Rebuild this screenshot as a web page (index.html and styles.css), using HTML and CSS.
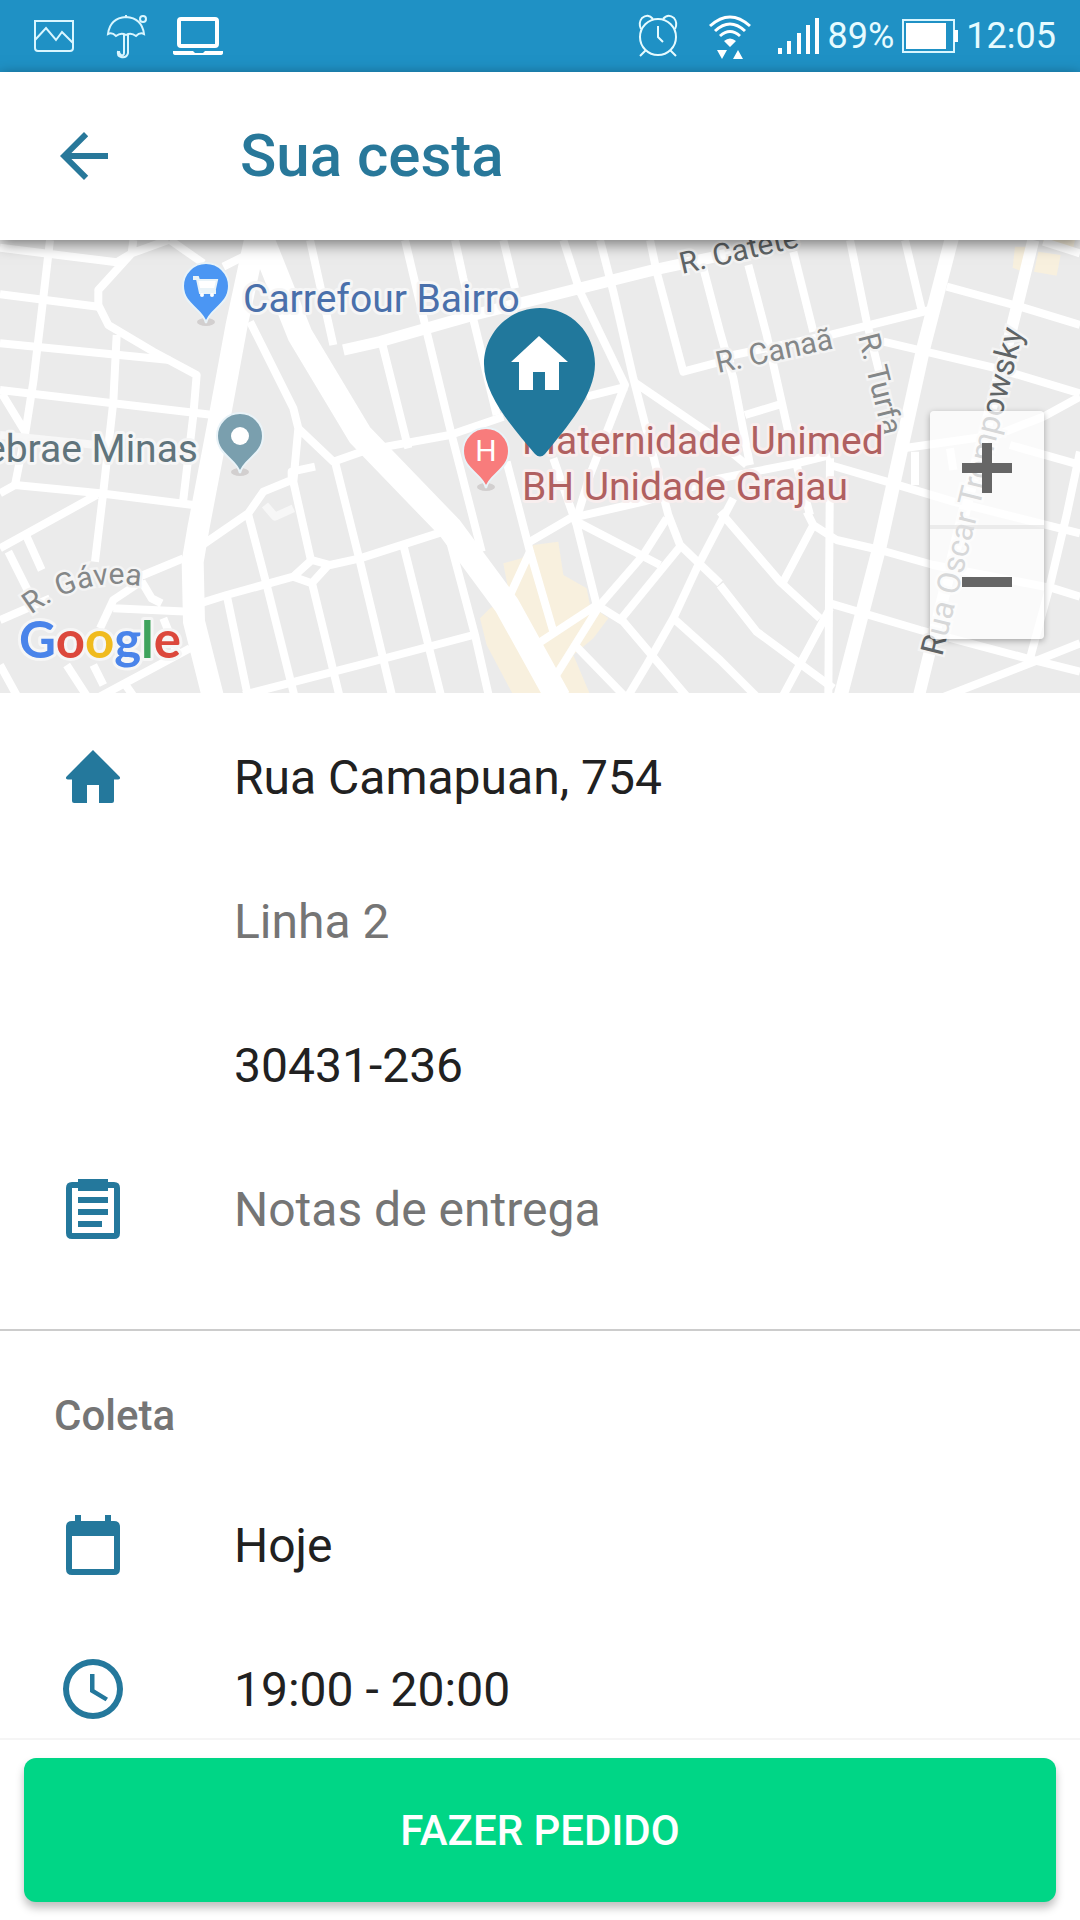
FILE: index.html
```
<!DOCTYPE html>
<html lang="pt-BR">
<head>
  <meta charset="UTF-8">
  <meta name="viewport" content="width=device-width, initial-scale=1">
  <title>Sua cesta</title>
  <link rel="stylesheet" href="styles.css">
</head>
<body>

<!-- Status bar -->
<div class="status-bar">
  <div class="status-group">
    <svg class="status-icon" viewBox="0 0 48 48" fill="none" stroke="#d9f6ff" stroke-width="2">
      <path d="M5 9H43V36Q43 39 40 39H8Q5 39 5 36Z"/>
      <path d="M5 28L16 16L26 28L32 20L43 31"/>
    </svg>
    <svg class="status-icon" viewBox="0 0 48 48" fill="none" stroke="#d9f6ff" stroke-width="2">
      <path d="M6 22Q8 6 24 5Q40 6 42 22Q38 20 34 24Q29 20 24 23Q19 20 14 24Q10 20 6 22Z"/>
      <path d="M24 3V5M22 23V41Q22 44 19 43Q17 42 17 39M26 23V41Q25 46 19 45Q15 44 16 39"/>
      <circle cx="41" cy="7" r="3"/>
    </svg>
    <svg class="status-icon" viewBox="0 0 48 48" fill="none" stroke="#fff">
      <rect x="5" y="7" width="38" height="27" rx="2" stroke-width="4"/>
      <path d="M-1 39H19L21 41H29L31 39H49V41Q49 43 46 43H2Q-1 43 -1 41Z" fill="#fff" stroke="none"/>
    </svg>
  </div>
  <div class="status-group">
    <svg class="status-icon" viewBox="0 0 48 48" fill="none" stroke="#e6fbff" stroke-width="2">
      <circle cx="24" cy="25" r="18"/>
      <path d="M7 17Q4 11 8 6Q14 1 19 7M41 17Q44 11 40 6Q34 1 29 7M12 38L6 44M36 38L42 44"/>
      <path d="M24 14V25L29 30"/>
    </svg>
    <svg class="status-icon" viewBox="0 0 48 48" fill="none" stroke="#fff" stroke-width="3">
      <path d="M4 14Q24 -4 44 14M9 19Q24 5 39 19M14 24Q24 15 34 24"/>
      <path d="M18 29Q24 24 30 29L24 35ZM11 38H21L16 47ZM27 47H37L32 38Z" fill="#fff" stroke="none"/>
    </svg>
    <svg class="signal-icon" viewBox="3 0 42 48" fill="#fff">
      <path d="M3 36H7V42H3ZM12 29H16V42H12ZM22 21H26V42H22ZM31 13H35V42H31ZM40 6H44V42H40Z"/>
    </svg>
    <div class="battery">
      <span>89%</span>
      <svg class="battery-icon" viewBox="0 0 56 48">
        <rect x="1" y="8" width="51" height="32" fill="none" stroke="#d9f6ff" stroke-width="2"/>
        <path d="M4 11H44V37H4ZM52 18H56V30H52Z" fill="#fff"/>
      </svg>
      <time>12:05</time>
    </div>
  </div>
</div>

<!-- App bar -->
<header class="app-bar">
  <button class="back-btn" aria-label="Voltar">
    <svg viewBox="0 0 24 24"><path d="M20 11H7.8l5.6-5.6L12 4l-8 8 8 8 1.4-1.4L7.8 13H20z"/></svg>
  </button>
  <h1>Sua cesta</h1>
</header>

<main class="content">

  <!-- Map -->
  <div class="map">
    <svg class="map-canvas" viewBox="0 0 1080 453" preserveAspectRatio="xMidYMid slice">
      <g transform="translate(0 -5) scale(0.33333)">
        <g class="blocks">
          <path d="M1510 985L1565 970L1600 930L1675 920L1690 1020L1760 1060L1770 1110L1825 1150L1780 1210L1720 1260L1775 1390H1545L1460 1230L1440 1150L1470 1120L1530 1090Z"/>
          <path d="M3045 35H3080L3072 112L3038 98ZM3115 50L3182 60L3170 122L3102 110ZM3130 15H3225L3220 38L3130 28Z"/>
        </g>
        <!-- streets, west side -->
        <g class="streets">
          <path d="M0 38L350 82L395 55L505 15M400 15L395 55L295 165V210L325 270L460 350L590 420L580 540L548 810"/>
          <path d="M150 15L125 230L100 440L75 600L45 750M510 15L610 85M670 95L740 60"/>
          <path d="M0 178L295 215M0 325L510 375M0 465L640 540M5 475L75 590"/>
          <path d="M350 300L340 500L310 770L285 980M0 775L45 750L300 775L580 810M290 780L0 940"/>
          <path d="M80 905L125 1005M25 950L85 1070M0 1155L150 1090"/>
          <path d="M550 970L430 1020H380M425 1040L455 1090L485 1105M430 1035L340 1095L300 1180M340 1120L570 1130"/>
          <path d="M0 1290L55 1390M200 1290L265 1390M280 1290L310 1350M290 1390L570 1240M370 1340L405 1390M490 1150L530 1250"/>
          <path d="M750 260L880 520L895 580L880 740L935 985M895 580L1000 680L1100 645M1005 680L1080 980L1178 1390"/>
          <path d="M945 695L875 710V735L790 770L745 835L600 935M745 840L800 1050L885 1390"/>
          <path d="M600 1105L680 1080L880 1025L935 975L990 990L1080 970L1330 890M880 1025L935 1045L985 990M935 1040L1020 1390M680 1080L745 1390"/>
          <path d="M730 1380L1080 1290L1420 1200M930 15L1000 330"/>
        </g>
        <!-- streets, centre -->
        <g class="streets">
          <path d="M1215 15L1280 290L1355 600L1445 950M1145 320L1225 640M1365 15L1390 130L1490 540M1510 15L1545 160"/>
          <path d="M1690 15L1740 170L1875 450L1770 720L1730 850M1800 15L1840 170L1900 430L2005 840L2040 930L2160 1045"/>
          <path d="M1760 485L1880 455M1900 440L2120 590L2240 690M1950 15L1970 110L2050 410L2200 370"/>
          <path d="M2110 100L2160 290L2200 430L2250 690M1130 640L1350 600L1510 545"/>
          <path d="M1210 930L1325 1390M1345 900L1425 1200L1468 1390M1520 680L1590 950L1660 1190"/>
          <path d="M1590 920L1710 850L1930 800L2160 730L2390 685L2490 660"/>
          <path d="M1660 670L1730 870L1790 1110L1870 1160L2065 1390M1730 860L1980 990M1590 950L1530 1080"/>
          <path d="M1600 1235L1790 1110M2000 850L1930 960L1800 1110L1650 1350M2040 935L1865 1150"/>
          <path d="M2200 790L2090 1000L2020 1150L1940 1290L1880 1390M2020 1150L2160 1275L2275 1390M1730 1235L1880 1390"/>
        </g>
        <!-- streets, east side -->
        <g class="streets">
          <path d="M2245 90L2300 300L2365 590M2235 540L2350 505M2380 50L2440 290M2550 15L2600 260L2640 420M2715 15L2765 225"/>
          <path d="M2200 360L2490 300L2790 225M2840 155L3060 215L3240 270M2650 320L2990 400L3240 475"/>
          <path d="M3130 20L3240 55M3240 485L3130 545L2990 600L2710 640M2745 650V750M2850 640L2860 705M3030 630L3240 690"/>
          <path d="M2390 690L2430 840M2490 690L2660 740L2860 800L3240 895M3240 650L3200 840L3150 1050L3090 1270"/>
          <path d="M2490 670L2485 1390M2420 830L2440 870L2510 915L2640 945L2800 990L3160 1060L3240 1085M2440 870L2350 1040"/>
          <path d="M2160 830L2340 1040L2460 1150M2160 1050L2270 1190L2500 1360M2490 1105L2760 1185L3080 1270L3240 1310"/>
          <path d="M2490 1120L2345 1390M3240 1225L3090 1285L2820 1390"/>
        </g>
        <path class="street-faint" d="M0 600L290 630M795 810L825 845L880 820"/>
        <g class="avenues">
          <path stroke-width="66" d="M765 15L710 270L660 540L595 880L578 980L582 1160L640 1390"/>
          <path stroke-width="76" d="M780 0L900 300L1080 600L1350 880L1520 1110L1675 1390"/>
          <path stroke-width="34" d="M1030 345L1140 320L1420 240L1740 160L1960 105L2240 45"/>
          <path stroke-width="42" d="M2858 0L2770 340L2640 930L2520 1390"/>
          <path stroke-width="36" d="M3100 15L3030 300L2900 800L2755 1390"/>
        </g>
      </g>

      <g class="street-names">
        <text class="dark" transform="translate(682 34) rotate(-13)">R. Catete</text>
        <text transform="translate(718 133) rotate(-12)">R. Canaã</text>
        <text transform="translate(858 96) rotate(76)">R. Turfa</text>
        <text class="dark avenue" transform="translate(942 417) rotate(-76)">Rua Oscar Trompowsky</text>
        <path id="gavea" fill="none" d="M31 375Q82 336 140 346"/>
        <text><textPath href="#gavea">R. Gávea</textPath></text>
      </g>

      <g class="places">
        <text class="shop" x="243" y="72">Carrefour Bairro</text>
        <text class="office" x="198" y="222" text-anchor="end">ebrae Minas</text>
        <text class="hospital" x="522" y="214">Maternidade Unimed</text>
        <text class="hospital" x="522" y="260">BH Unidade Grajau</text>
      </g>

      <!-- place pins -->
      <g class="pins">
        <g transform="translate(206 46)">
          <ellipse cx="0" cy="36" rx="9" ry="4"/>
          <path fill="#4b96f3" d="M0 37C-3 23-23 19-23 0A23 23 0 0 1 23 0C23 19 3 23 0 37Z"/>
          <path fill="#fff" stroke="none" d="M-12-9H-8L-7-6H11L9 3H-5L-4 5H9V7H-6L-9-7H-12Z"/>
          <circle class="dot" cx="-4" cy="9" r="2"/><circle class="dot" cx="6" cy="9" r="2"/>
        </g>
        <g transform="translate(240 196)">
          <ellipse cx="0" cy="36" rx="9" ry="4"/>
          <path fill="#7a9fae" d="M0 37C-3 23-23 19-23 0A23 23 0 0 1 23 0C23 19 3 23 0 37Z"/>
          <circle class="dot" cx="0" cy="0" r="9"/>
        </g>
        <g transform="translate(486 211)">
          <ellipse cx="0" cy="36" rx="9" ry="4"/>
          <path fill="#f87c7c" d="M0 37C-3 23-23 19-23 0A23 23 0 0 1 23 0C23 19 3 23 0 37Z"/>
          <text x="0" y="10" text-anchor="middle">H</text>
        </g>
      </g>

      <!-- delivery address pin -->
      <path fill="#21789c" d="M540 68C571 68 595 93 595 124C595 155 567 187 545 214Q540 219 535 214C512 187 484 155 484 124C484 93 509 68 540 68Z"/>
      <path fill="#fff" d="M539 96L568 122H559V150H545V132H533V150H519V122H511Z"/>

      <text class="logo" x="19" y="418"><tspan fill="#4a84ea">G</tspan><tspan fill="#dc483c">o</tspan><tspan fill="#f0bb1f">o</tspan><tspan fill="#4a84ea">g</tspan><tspan fill="#3ea35c">l</tspan><tspan fill="#dc483c">e</tspan></text>
    </svg>

    <div class="zoom">
      <button aria-label="Aumentar zoom"><svg viewBox="0 0 50 50"><path d="M20 0H30V20H50V30H30V50H20V30H0V20H20Z"/></svg></button>
      <button aria-label="Diminuir zoom"><svg viewBox="0 0 50 50"><path d="M0 20H50V30H0Z"/></svg></button>
    </div>
  </div>

  <!-- Address -->
  <section class="address">
    <label class="row">
      <svg class="row-icon" viewBox="0 0 24 24"><path d="M12 3L3.2 11.8Q2.6 12.6 3.6 12.8H5V20Q5 20.7 5.7 20.7H10V14.7H14V20.7H18.3Q19 20.7 19 20V12.8H20.4Q21.4 12.6 20.8 11.8Z"/></svg>
      <input type="text" value="Rua Camapuan, 754" aria-label="Endereço">
    </label>
    <label class="row">
      <span class="row-icon"></span>
      <input type="text" placeholder="Linha 2" aria-label="Linha 2">
    </label>
    <label class="row">
      <span class="row-icon"></span>
      <input type="text" value="30431-236" aria-label="CEP">
    </label>
    <label class="row">
      <svg class="row-icon" viewBox="0 0 24 24"><path fill-rule="evenodd" d="M7 2H17V3H19Q21 3 21 5V20Q21 22 19 22H5Q3 22 3 20V5Q3 3 5 3H7ZM5 5V20H19V5H17V6H7V5ZM7 8H17V10H7ZM7 12H17V14H7ZM7 16H15V18H7Z"/></svg>
      <input type="text" placeholder="Notas de entrega" aria-label="Notas de entrega">
    </label>
  </section>

  <!-- Pickup -->
  <section class="pickup">
    <h2>Coleta</h2>
    <button class="row">
      <svg class="row-icon" viewBox="0 0 24 24"><path fill-rule="evenodd" d="M6 2H8V4H16V2H18V4H19Q21 4 21 6V20Q21 22 19 22H5Q3 22 3 20V6Q3 4 5 4H6ZM5 9V20H19V9Z"/></svg>
      <span>Hoje</span>
    </button>
    <button class="row">
      <svg class="row-icon" viewBox="0 0 24 24"><path fill-rule="evenodd" d="M12 2A10 10 0 1 0 12 22A10 10 0 1 0 12 2ZM12 4A8 8 0 1 1 12 20A8 8 0 1 1 12 4Z"/><path d="M11 7H12.5V12.2L17 14.9L16.2 16.1L11 13Z"/></svg>
      <span>19:00 - 20:00</span>
    </button>
  </section>
</main>

<footer class="footer">
  <button class="order-btn">FAZER PEDIDO</button>
</footer>

</body>
</html>
```
FILE: styles.css
```
* {
  box-sizing: border-box;
}
body {
  font-family: Roboto, "Liberation Sans", sans-serif;
  background: #fff;
  color: #212121;
  margin: 0;
  height: 100vh;
  display: flex;
  flex-direction: column;
}
button,
input {
  font: inherit;
  color: inherit;
  background: none;
  border: none;
  padding: 0;
  cursor: pointer;
}
svg {
  display: block;
}

/* Status bar */
.status-bar {
  display: flex;
  justify-content: space-between;
  background: #1f91c5;
  color: #e6fbff;
  font-size: 36px;
  line-height: 72px;
  padding: 0 24px 0 30px;
}
.status-group {
  display: flex;
  align-items: center;
  gap: 24px;
}
.status-icon {
  width: 48px;
  height: 48px;
  overflow: visible;
}
.signal-icon {
  width: 42px;
  height: 48px;
}
.battery {
  display: flex;
  align-items: center;
  gap: 8px;
  margin-left: -16px;
}
.battery-icon {
  width: 56px;
  height: 48px;
}

/* App bar */
.app-bar {
  display: flex;
  align-items: center;
  gap: 120px;
  padding: 48px;
  background: #fff;
  box-shadow: 0 4px 14px rgba(0,0,0,0.5);
  position: relative;
  z-index: 1;
}
.back-btn svg {
  width: 72px;
  height: 72px;
  fill: #28789a;
}
h1 {
  margin: 0;
  font-size: 60px;
  font-weight: 500;
  line-height: 72px;
  color: #28789a;
}

.content {
  flex: 1;
  min-height: 0;
  overflow-y: auto;
  scrollbar-width: none;
}

/* Map */
.map {
  position: relative;
  background: #ebebeb;
}
.map-canvas {
  width: 100%;
  height: auto;
}
.blocks {
  fill: #f8f0de;
}
.streets,
.street-faint {
  fill: none;
  stroke: #fff;
  stroke-width: 24px;
  stroke-linejoin: round;
}
.street-faint {
  stroke: #f7f7f7;
}
.avenues {
  fill: none;
  stroke: #fff;
  stroke-linejoin: round;
}
.street-names text {
  font-size: 30px;
  fill: #848788;
  stroke: #f4f4f4;
  stroke-width: 5px;
  paint-order: stroke;
}
.street-names .dark {
  fill: #606567;
}
.street-names .avenue {
  font-size: 32px;
}
.places text {
  font-size: 39px;
  stroke: #f6f6f6;
  stroke-width: 6px;
  stroke-linejoin: round;
  paint-order: stroke;
}
.places .shop {
  fill: #4a70ab;
}
.places .office {
  fill: #60747c;
}
.places .hospital {
  fill: #b06060;
  stroke: #f8eeee;
}
.pins ellipse {
  fill: #d2cfcf;
}
.pins path {
  stroke: #e9f3f8;
  stroke-width: 2px;
}
.pins .dot,
.pins text {
  fill: #fff;
}
.pins text {
  font-size: 30px;
}
.logo {
  font-family: Lato, sans-serif;
  font-size: 51px;
  font-weight: 700;
  stroke: #f6f6f6;
  stroke-width: 6px;
  stroke-linejoin: round;
  paint-order: stroke;
}

/* Zoom buttons over the map */
.zoom {
  position: absolute;
  right: 36px;
  bottom: 54px;
  display: flex;
  flex-direction: column;
  background: rgba(255,255,255,0.75);
  border-radius: 4px;
  box-shadow: 0 2px 6px rgba(0,0,0,0.3);
}
.zoom button {
  padding: 32px;
}
.zoom button + button {
  border-top: 4px solid rgba(225,225,225,0.6);
  padding-top: 28px;
}
.zoom svg {
  width: 50px;
  height: 50px;
  fill: #666;
}

/* Form rows */
.address {
  padding: 12px 0 48px;
  border-bottom: 2px solid #ccc;
}
.row {
  display: flex;
  align-items: center;
  gap: 105px;
  width: 100%;
  height: 144px;
  padding: 0 57px;
  font-size: 48px;
  text-align: left;
}
.row-icon {
  flex: none;
  width: 72px;
  height: 72px;
  fill: #24789c;
}
.row input {
  flex: 1;
  min-width: 0;
  cursor: text;
  outline: none;
}
.row input::placeholder {
  color: #757575;
  opacity: 1;
}
h2 {
  margin: 0;
  padding: 60px 54px 32px;
  font-size: 42px;
  font-weight: 500;
  line-height: 50px;
  color: #757575;
}

/* Order button */
.footer {
  padding: 18px 24px;
  background: #fff;
  border-top: 2px solid #f5f5f5;
}
.order-btn {
  display: block;
  width: 100%;
  height: 144px;
  border-radius: 12px;
  background: #00d686;
  box-shadow: 0 6px 8px rgba(0,0,0,0.25);
  color: #fff;
  font-size: 42px;
  font-weight: 500;
}
```
